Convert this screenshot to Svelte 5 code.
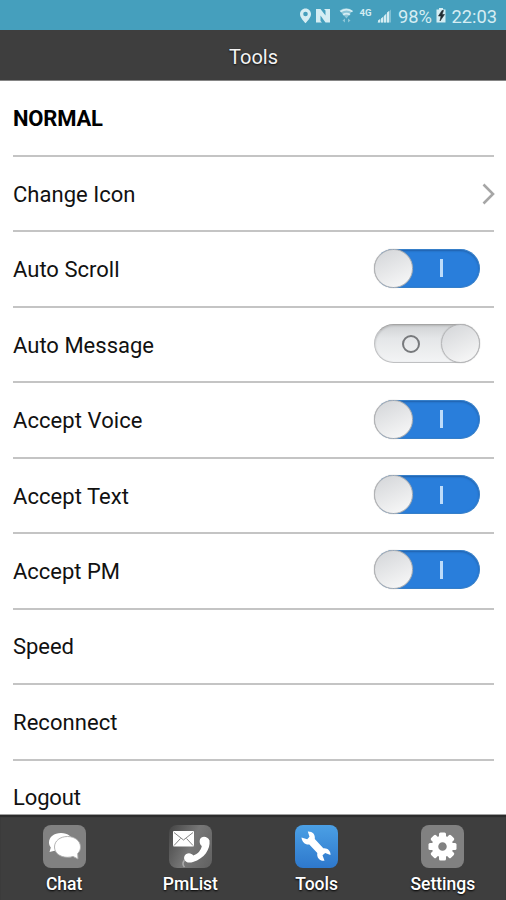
<script lang="ts">
	type Row = { label: string; kind?: 'title' | 'link' | 'switch'; on?: boolean; width: number };

	let rows: Row[] = $state([
		{ label: 'NORMAL', kind: 'title', width: 90 },
		{ label: 'Change Icon', kind: 'link', width: 122.5 },
		{ label: 'Auto Scroll', kind: 'switch', on: true, width: 106.5 },
		{ label: 'Auto Message', kind: 'switch', on: false, width: 141 },
		{ label: 'Accept Voice', kind: 'switch', on: true, width: 129.5 },
		{ label: 'Accept Text', kind: 'switch', on: true, width: 116 },
		{ label: 'Accept PM', kind: 'switch', on: true, width: 107 },
		{ label: 'Speed', width: 61 },
		{ label: 'Reconnect', width: 104.5 },
		{ label: 'Logout', width: 68 }
	]);

	const tabs = ['Chat', 'PmList', 'Tools', 'Settings'];
	let active = $state('Tools');

	const teeth = [0, 45, 90, 135, 180, 225, 270, 315];
</script>

<div class="screen">
	<div class="status-bar">
		<svg width="202" height="30" viewBox="0 0 202 30">
			<g fill="#d5edf3">
				<path fill-rule="evenodd" d="M7.500 8.500c-3.200 0-5.500 2.500-5.500 5.500 0 3.200 3 6.500 5.500 9.300C10 20.500 13 17.200 13 14c0-3-2.300-5.500-5.500-5.500zm0 3.200a2.300 2.300 0 1 1 0 4.600 2.300 2.300 0 0 1 0-4.600z" />
				<path d="M18 9h4.500l5 6.500v-5L26 9h6v13.500h-4.500L22.500 15.500v5.500l1.500 1.500h-6z" />
				<path d="M41.500 10.500q6.500-4.500 13 0L48.500 18.500z" opacity=".5" />
				<path d="M42 11q6.500-4.500 13 0l-1 1.200q-5.500-3.600-11 0zM44.500 14q4-2.500 8 0l-1.200 1.400q-2.800-1.600-5.600 0z" />
				<path d="M44.500 20.500l2.500-2v4zM52.500 20.500l-2.500-2v4z" opacity=".5" />
				<g transform="translate(1 0)">
					<path d="M78 22.500L92 9.500v13z" opacity=".4" />
					<path d="M79 22.500v-2l2-1.500v3.500zM82 22.500v-4l2-1.500v5.500zM85 22.500V16l2-2v8.500zM88 22.500v-10l2-1.500v11.500z" />
				</g>
				<path d="M138.500 9.500h2.500V8h4v1.500h2.500v13h-9z" />
			</g>
			<path d="M144 10.500l-3.500 5.500h2.500l-1 5 4.500-6.500h-2.500l1.500-4z" fill="#202c32" stroke="#202c32" stroke-width=".6" />
			<text class="network" x="61.500" y="16" textLength="12" lengthAdjust="spacingAndGlyphs">4G</text>
			<text x="100" y="23" textLength="34" lengthAdjust="spacingAndGlyphs">98%</text>
			<text x="153.500" y="23" textLength="45.500" lengthAdjust="spacingAndGlyphs">22:03</text>
		</svg>
	</div>

	<header>
		<h1>Tools</h1>
	</header>

	<main>
		{#each rows as row}
			<div class="row" class:title={row.kind === 'title'}>
				<svg class="label" width="180" height="32">
					<text x="0" y="24" textLength={row.width}>{row.label}</text>
				</svg>
				{#if row.kind === 'link'}
					<svg class="chevron" width="14" height="24" viewBox="0 0 14 24">
						<path d="M2.500 2.500l9.500 9.500-9.500 9.500" fill="none" stroke="#a6a6a6" stroke-width="2.600" />
					</svg>
				{:else if row.kind === 'switch'}
					<button class="switch" class:on={row.on} aria-label={row.label} onclick={() => (row.on = !row.on)}>
						<span class="knob"></span>
						<span class="mark"></span>
					</button>
				{/if}
			</div>
		{/each}
	</main>

	<nav>
		{#each tabs as tab}
			<button class="tab" onclick={() => (active = tab)}>
				<span class="icon" class:active={active === tab} class:pm={tab === 'PmList'}>
					<svg width="43" height="43" viewBox="0 0 43 43" fill="#fff">
						{#if tab === 'Chat'}
							<path d="M18 8c7 0 12 4 12 9.500S25 27 18 27c-2.500 0-4.500-.5-6.500-1.300L6.500 27l1.300-4.500C6.500 21 6 19.200 6 17.500 6 12 11 8 18 8z" />
							<path d="M24.500 11.500c7.500 0 13 4.500 13 10.500 0 2.500-1 4.800-2.800 6.500l.3 5.500-5-2.600c-1.700.6-3.600.9-5.500.9-7.500 0-13-4.300-13-10.300s5.500-10.500 13-10.500z" stroke="#aaa" stroke-width=".9" />
						{:else if tab === 'PmList'}
							<rect x="4" y="6" width="21" height="15.500" rx="1" />
							<path d="M5 7.500l9.500 7.500L24 7.500M5 20.500l6.500-7M24 20.500l-6.500-7" fill="none" stroke="#858585" stroke-width="1" />
							<path d="M32.500 12.500c2.500-1.500 6.500-.5 8 3 1 8.500-5 18-16.500 21.500-4 1.300-7.500.5-8.700-2.500-.7-2 .1-4.300 2-5.500 3-1.500 5.500-.2 7 1.500 4.700-1.500 7.500-5 8.500-9.500-2.500-1.600-3-6.800-.3-8.500z" />
							<path d="M15.500 35q-3 4 0 7" fill="none" stroke="#aaa" stroke-width="1.500" />
						{:else if tab === 'Tools'}
							<path d="M6.500 12.500l5.700 1.800 2.300-2.500-1.700-5.300c4.800-.2 7.700 3 7 7.500l8.500 9.300c4.200-.5 7.500 2.500 7.200 6.700l-5.300-2-2.700 2.300 2 5.500c-4.700.5-8-3-7.200-7.800l-8-8.500C10.300 20 6.800 17 6.500 12.500z" />
						{:else}
							{#each teeth as angle}
								<rect x="18" y="7.500" width="7" height="9" rx="1.500" transform="rotate({angle} 21.500 21.500)" />
							{/each}
							<circle cx="21.500" cy="21.500" r="7.500" fill="none" stroke="#fff" stroke-width="6.500" />
						{/if}
					</svg>
				</span>
				<span class="tab-label">{tab}</span>
			</button>
		{/each}
	</nav>
</div>

<style>
	:global(body) {
		background: #fff;
		overflow: hidden;
	}

	.screen {
		width: 506px;
		height: 900px;
		display: flex;
		flex-direction: column;
		overflow: hidden;
		background: #fff;
		font-family: Roboto, sans-serif;
	}

	button {
		border: 0;
		padding: 0;
		background: none;
		font: inherit;
	}

	.status-bar {
		flex: none;
		height: 30px;
		display: flex;
		justify-content: flex-end;
		padding-right: 6px;
		background: #459fbd;
	}

	.status-bar svg {
		overflow: visible;
	}

	.status-bar text {
		fill: #d5edf3;
		font-size: 19px;
	}

	.status-bar .network {
		font-size: 8.5px;
		font-weight: 700;
	}

	header {
		flex: none;
		box-sizing: border-box;
		height: 51px;
		padding-top: 3px;
		display: flex;
		align-items: center;
		justify-content: center;
		background: #3e3e3e;
		border-bottom: 1px solid #858585;
	}

	h1 {
		margin: 0 0 0 1px;
		color: #f4f4f4;
		font-size: 20px;
		font-weight: 400;
		text-shadow: 0 1px 2px #111;
	}

	main {
		flex: 1;
		min-height: 0;
		overflow: hidden;
		padding: 0.6px 12px 0 13px;
	}

	.row {
		box-sizing: border-box;
		height: 75.45px;
		display: flex;
		align-items: center;
		justify-content: space-between;
		border-bottom: 2px solid #c4c4c4;
	}

	.label {
		flex: none;
		overflow: visible;
	}

	.label text {
		font-size: 22px;
		fill: #111;
	}

	.title .label text {
		font-weight: 700;
		fill: #000;
	}

	.chevron {
		margin-right: -1px;
	}

	.switch {
		box-sizing: border-box;
		width: 106px;
		height: 39px;
		margin: 0 14.5px 2px 0;
		display: flex;
		flex-direction: row-reverse;
		align-items: center;
		border: 1px solid #bfc0c2;
		border-top-color: #a5a5a5;
		border-radius: 20px;
		background: linear-gradient(#d0d2d4, #e4e6e8 35%, #f3f4f5);
		box-shadow: inset 0 1px 2px #b5b6b8;
	}

	.switch.on {
		flex-direction: row;
		border-color: #367fc9;
		border-left-color: #aaa;
		background: #297edb;
		box-shadow: inset 0 1px 2px #2160a9;
	}

	.knob {
		box-sizing: border-box;
		flex: none;
		width: 39px;
		height: 39px;
		margin: 0 -1px;
		border: 1px solid #b4b5b7;
		border-radius: 50%;
		background: linear-gradient(155deg, #d3d5d8, #fafafa);
		box-shadow: 0 0 1px #999;
	}

	.mark {
		box-sizing: border-box;
		width: 18px;
		height: 18px;
		margin-right: 22px;
		border: 2.5px solid #77797c;
		border-radius: 50%;
	}

	.on .mark {
		width: 3px;
		height: 18px;
		margin: 0 0 0 28.5px;
		border: 0;
		border-radius: 0;
		background: #bddcfa;
	}

	nav {
		flex: none;
		box-sizing: border-box;
		height: 86px;
		padding-left: 1px;
		display: grid;
		grid-template-columns: repeat(4, 1fr);
		border-top: 1px solid #a0a0a0;
		background: #3e3e3e;
		box-shadow: inset 0 2px 1px #2b2b2b;
	}

	.tab {
		display: flex;
		flex-direction: column;
		align-items: center;
		padding-top: 10px;
	}

	.icon {
		display: flex;
		width: 43px;
		height: 43px;
		border-radius: 8px;
		overflow: hidden;
		background: #818181;
	}

	.icon.pm {
		background: linear-gradient(115deg, #444, #777 50%, #606060);
	}

	.icon.active {
		background: linear-gradient(#4ba0e5, #2e78cc);
	}

	.tab-label {
		margin-top: 4px;
		color: #fff;
		font-size: 17.5px;
		font-weight: 500;
		line-height: 24px;
		text-shadow: 0 1px 2px #000;
	}
</style>
